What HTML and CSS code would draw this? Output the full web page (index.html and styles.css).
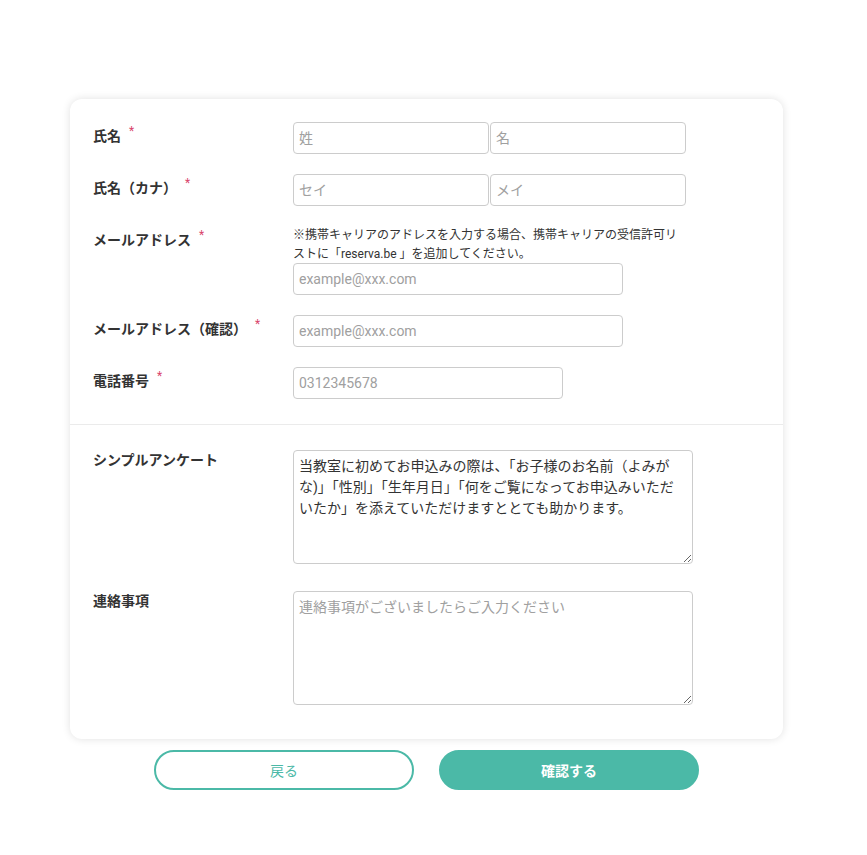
FILE: index.html
```html
<!DOCTYPE html>
<html lang="ja">

<head>
    <meta charset="UTF-8">
    <meta name="viewport" content="width=device-width, initial-scale=1.0">
    <title>予約フォーム</title>
    <link rel="stylesheet" href="styles.css">
</head>

<body>
    <div class="page">
        <form class="card">
            <!-- contact info -->
            <section class="block">
                <div class="row">
                    <label class="label">氏名<span class="req">*</span></label>
                    <div class="field pair">
                        <input type="text" class="input half" placeholder="姓">
                        <input type="text" class="input half" placeholder="名">
                    </div>
                </div>

                <div class="row">
                    <label class="label">氏名（カナ）<span class="req">*</span></label>
                    <div class="field pair">
                        <input type="text" class="input half" placeholder="セイ">
                        <input type="text" class="input half" placeholder="メイ">
                    </div>
                </div>

                <div class="row">
                    <label class="label">メールアドレス<span class="req">*</span></label>
                    <div class="field">
                        <p class="note">※携帯キャリアのアドレスを入力する場合、携帯キャリアの受信許可リストに「reserva.be 」を追加してください。</p>
                        <input type="email" class="input mail" placeholder="example@xxx.com">
                    </div>
                </div>

                <div class="row">
                    <label class="label">メールアドレス（確認）<span class="req">*</span></label>
                    <div class="field">
                        <input type="email" class="input mail" placeholder="example@xxx.com">
                    </div>
                </div>

                <div class="row">
                    <label class="label">電話番号<span class="req">*</span></label>
                    <div class="field">
                        <input type="tel" class="input tel" placeholder="0312345678">
                    </div>
                </div>
            </section>

            <hr class="divider">

            <!-- questions -->
            <section class="block block-bottom">
                <div class="row">
                    <label class="label label-top">シンプルアンケート</label>
                    <div class="field">
                        <textarea class="textarea">当教室に初めてお申込みの際は、「お子様のお名前（よみがな)」「性別」「生年月日」「何をご覧になってお申込みいただいたか」を添えていただけますととても助かります。</textarea>
                    </div>
                </div>

                <div class="row">
                    <label class="label label-top">連絡事項</label>
                    <div class="field">
                        <textarea class="textarea" placeholder="連絡事項がございましたらご入力ください"></textarea>
                    </div>
                </div>
            </section>
        </form>

        <div class="actions">
            <button type="button" class="btn btn-back">戻る</button>
            <button type="submit" class="btn btn-confirm">確認する</button>
        </div>
    </div>
</body>

</html>
```

FILE: styles.css
```css
* {
    box-sizing: border-box;
    margin: 0;
    padding: 0;
}

body {
    background-color: #fff;
    color: #333;
    font-family: Roboto, 'Noto Sans CJK JP', sans-serif;
    font-size: 14px;
}

.page {
    width: 713px;
    margin-left: 70px;
    padding-top: 99px;
    padding-bottom: 40px;
}

.card {
    background-color: #fff;
    border-radius: 12px;
    box-shadow: 0 0 8px rgba(0, 0, 0, 0.12);
}

.block {
    display: flex;
    flex-direction: column;
    gap: 20px;
    padding: 23px 23px 25px;
}

.block-bottom {
    gap: 27px;
    padding-top: 25px;
    padding-bottom: 34px;
}

.divider {
    border: none;
    border-top: 1px solid #ebebeb;
}

.row {
    display: flex;
}

.label {
    width: 200px;
    flex-shrink: 0;
    padding-top: 3px;
    font-weight: 700;
    font-size: 14px;
    line-height: 20px;
    color: #333;
}

.label-top {
    padding-top: 0;
}

.req {
    display: inline-block;
    margin-left: 8px;
    vertical-align: 6px;
    font-size: 12px;
    line-height: 1;
    font-weight: 400;
    color: #d9456b;
}

.field {
    display: flex;
    flex-direction: column;
}

.pair {
    flex-direction: row;
    gap: 1px;
}

.note {
    font-size: 12px;
    line-height: 18.5px;
    width: 394px;
    color: #333;
}

.input {
    height: 32px;
    border: 1px solid #ccc;
    border-radius: 4px;
    padding: 0 5px;
    font-family: Roboto, 'Noto Sans CJK JP', sans-serif;
    font-size: 14px;
    color: #333;
    background-color: #fff;
}

.input::placeholder,
.textarea::placeholder {
    color: #a0a0a0;
}

.half {
    width: 196px;
}

.mail {
    width: 330px;
}

.tel {
    width: 270px;
}

.textarea {
    width: 400px;
    height: 114px;
    border: 1px solid #ccc;
    border-radius: 4px;
    padding: 5px;
    font-family: Roboto, 'Noto Sans CJK JP', sans-serif;
    font-size: 14px;
    line-height: 21px;
    color: #333;
    resize: vertical;
}

.actions {
    display: flex;
    justify-content: center;
    gap: 25px;
    margin-top: 11px;
}

.btn {
    width: 260px;
    height: 40px;
    border-radius: 20px;
    border: 2px solid #4bb9a7;
    font-family: Roboto, 'Noto Sans CJK JP', sans-serif;
    font-size: 14px;
    cursor: pointer;
}

.btn-back {
    background-color: #fff;
    color: #4bb9a7;
}

.btn-confirm {
    background-color: #4bb9a7;
    color: #fff;
    font-weight: 700;
}
```
